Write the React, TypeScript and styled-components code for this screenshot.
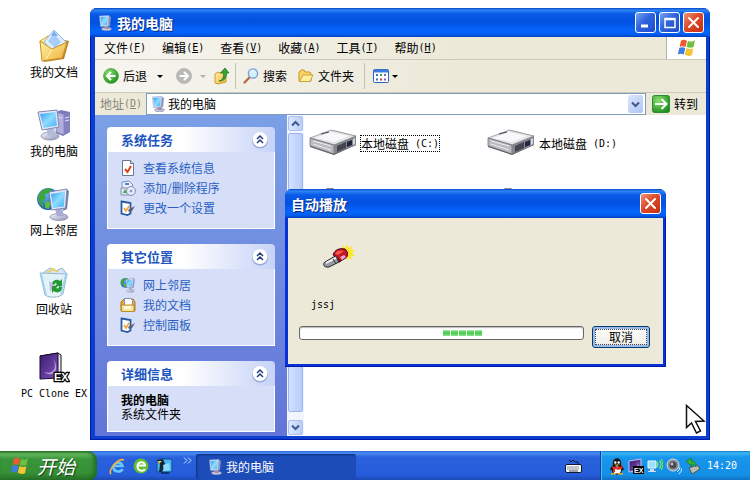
import React from 'react';
import styled, { createGlobalStyle } from 'styled-components';

const cjk = `"Noto Sans CJK SC", sans-serif`;
const mono = `"DejaVu Sans Mono", "Noto Sans CJK SC", monospace`;

const GlobalStyle = createGlobalStyle`
  * { box-sizing: border-box; }
  body { margin: 0; background: #fff; font: 12px/16px ${cjk}; color: #000; }
  button, input { font: inherit; color: inherit; padding: 0; margin: 0; border: 0; background: none; }
  svg { display: block; flex: none; }
  h1, h2, p, ul { margin: 0; padding: 0; font: inherit; }
  ul { list-style: none; }
`;

/* ---------- layout ---------- */

const Page = styled.div`
  min-height: 100vh;
  display: flex;
  flex-direction: column;
`;

const Workspace = styled.main`
  flex: 1;
  display: grid;
  grid-template-columns: 90px minmax(0, 1fr);
`;

const Shortcuts = styled.nav`
  display: flex;
  flex-direction: column;
  gap: 27px;
  padding: 28px 0 0 18px;
`;

const Shortcut = styled.button<{ $spaced?: boolean }>`
  display: flex;
  flex-direction: column;
  align-items: center;
  white-space: nowrap;
  margin-top: ${p => (p.$spaced ? '6px' : '0')};
`;

const Latin = styled.span`
  font: 10px/16px ${mono};
`;

const AccessKey = styled(Latin)`
  u { text-underline-offset: 1px; }
`;

const Window = styled.section`
  position: relative;
  display: flex;
  flex-direction: column;
  margin: 8px 40px 11px 0;
  border-radius: 7px 7px 0 0;
  background: #0a3fd0;
  box-shadow: inset 1px 0 #0019a8, inset -1px -1px #0019a8;
`;

const TitleBar = styled.header<{ $inset: number }>`
  display: flex;
  align-items: center;
  gap: 4px;
  height: 29px;
  padding: 0 ${p => p.$inset}px 0 ${p => p.$inset + 1}px;
  border-radius: 7px 7px 0 0;
  background: linear-gradient(#0a43c4 0, #2d86f5 2px, #0a5ae6 6px, #0250e0 14px, #0464fb 22px, #0360f5 26px, #0240c0 29px);
`;

const Title = styled.h1`
  flex: 1;
  font-size: 14px;
  line-height: 20px;
  font-weight: 700;
  color: #fff;
  text-shadow: 1px 1px #0a2a80;
`;

const CaptionButtons = styled.div`
  display: flex;
  gap: 3px;
`;

const CaptionButton = styled.button<{ $close?: boolean }>`
  display: grid;
  place-items: center;
  width: 21px;
  height: 21px;
  border: 1px solid #fff;
  border-radius: 3px;
  background: ${p => (p.$close
    ? 'linear-gradient(135deg, #ee9678, #dc4a28 45%, #c33012)'
    : 'linear-gradient(135deg, #7ba2f2, #2f63dc 45%, #1c4cd0)')};
`;

const WindowBody = styled.div`
  flex: 1;
  display: flex;
  flex-direction: column;
  margin: 0 4px 4px 5px;
  background: #ece9d8;
`;

const MenuRow = styled.div`
  display: flex;
  height: 23px;
  border-bottom: 1px solid #cdc9b8;
  background: linear-gradient(90deg, #f6f5f0, #ece9d8 60%);
`;

const Menu = styled.nav`
  flex: 1;
  display: flex;
  align-items: center;
  gap: 16px;
  padding-left: 9px;
`;

const MenuItem = styled.button`
  display: flex;
  white-space: nowrap;
`;

const FlagBox = styled.div`
  display: grid;
  place-items: center;
  width: 40px;
  border-left: 1px solid #b8b4a4;
  background: #fff;
`;

const Toolbar = styled.div`
  display: flex;
  align-items: center;
  height: 33px;
  padding-left: 8px;
  border-bottom: 1px solid #cdc9b8;
  background: linear-gradient(90deg, #f6f5f0, #ece9d8 60%);
`;

const ToolButton = styled.button<{ $after: number }>`
  display: flex;
  align-items: center;
  gap: 4px;
  margin-right: ${p => p.$after}px;
  white-space: nowrap;
`;

const Divider = styled.div<{ $after: number }>`
  width: 1px;
  height: 26px;
  margin-right: ${p => p.$after}px;
  background: #c5c2b2;
`;

const Caret = styled.span<{ $muted?: boolean; $before: number }>`
  margin-left: ${p => p.$before}px;
  border: 3px solid transparent;
  border-bottom: 0;
  border-top-color: ${p => (p.$muted ? '#b5b3aa' : '#000')};
`;

const AddressRow = styled.div`
  display: flex;
  align-items: center;
  height: 22px;
  padding-right: 8px;
`;

const AddressLabel = styled.label`
  display: flex;
  width: 51px;
  padding-left: 5px;
  color: #88867c;
`;

const Combo = styled.div`
  flex: 1;
  display: flex;
  align-items: center;
  gap: 2px;
  height: 22px;
  padding: 0 2px 0 3px;
  border: 1px solid #7f9db9;
  background: #fff;
`;

const ComboInput = styled.input`
  flex: 1;
  min-width: 0;
  outline: 0;
`;

const ComboArrow = styled.button`
  display: grid;
  place-items: center;
  width: 15px;
  height: 18px;
  border-radius: 2px;
  background: linear-gradient(135deg, #dce7fd, #aec5f5);
`;

const GoButton = styled.button`
  display: flex;
  align-items: center;
  gap: 4px;
  margin-left: 6px;
  white-space: nowrap;
`;

const Content = styled.div`
  flex: 1;
  display: grid;
  grid-template-columns: 192px 17px minmax(0, 1fr);
  background: #fff;
`;

const Sidebar = styled.aside`
  display: flex;
  flex-direction: column;
  gap: 15px;
  padding: 12px 12px 4px;
  background: linear-gradient(#7ba0e6, #6375d8);
`;

const PanelBox = styled.section`
  border-radius: 4px 4px 0 0;
  overflow: hidden;
`;

const PanelHead = styled.header`
  display: flex;
  align-items: center;
  justify-content: space-between;
  height: 25px;
  padding: 0 6px 0 14px;
  background: linear-gradient(90deg, #fff 45%, #c6d3f7);
  color: #1c55c0;
`;

const PanelTitle = styled.h2`
  font-size: 13px;
  font-weight: 700;
`;

const PanelBody = styled.div`
  padding: 6px 12px 10px;
  border: 1px solid #fff;
  border-top: 0;
  background: #d6dff7;
`;

const TaskLink = styled.a`
  display: flex;
  align-items: center;
  gap: 7px;
  height: 20px;
  color: #2a5fc4;
  text-decoration: none;
`;

const Details = styled.div`
  padding: 1px 1px 0;
  line-height: 14px;
`;

const Scroll = styled.div`
  display: flex;
  flex-direction: column;
  gap: 2px;
  padding: 1px;
  background: #f3f5fd;
`;

const ScrollButton = styled.button`
  display: grid;
  place-items: center;
  height: 15px;
  border: 1px solid #a9c0f0;
  border-radius: 2px;
  background: linear-gradient(90deg, #dde8ff, #b9cdfa);
`;

const Thumb = styled.div`
  flex: 1;
  margin-bottom: 6px;
  border: 1px solid #9cb4ea;
  border-radius: 2px;
  background: linear-gradient(90deg, #d3e0ff, #b7ccfb);
`;

const Files = styled.div`
  display: grid;
  grid-template-columns: repeat(auto-fill, 178px);
  grid-auto-rows: 28px;
  align-content: start;
  row-gap: 31px;
  padding: 14px 5px;
`;

const FileItem = styled.button`
  display: flex;
  align-items: center;
  gap: 4px;
`;

const FileName = styled.span<{ $focus?: boolean }>`
  display: flex;
  height: 15px;
  line-height: 15px;
  white-space: pre;
  outline: ${p => (p.$focus ? '1px dotted #000' : '0')};
`;

/* ---------- dialog ---------- */

const Dialog = styled.section`
  position: absolute;
  left: 195px;
  right: 44px;
  top: 181px;
  border-radius: 7px 7px 0 0;
  background: #0831d9;
  box-shadow: inset -1px -1px #0019a8;
`;

const DialogBody = styled.div`
  display: flex;
  flex-direction: column;
  margin: 0 3px;
  padding: 26px 13px 16px 11px;
  background: #ece9d8;
`;

const DialogEdge = styled.div`
  height: 3px;
`;

const DialogIcon = styled.div`
  margin-left: 23px;
`;

const DialogText = styled.p`
  margin: 26px 0 13px 12px;
  font: 10px/16px ${mono};
`;

const DialogRow = styled.div`
  display: flex;
  align-items: flex-start;
  gap: 8px;
`;

const Progress = styled.div`
  flex: 1;
  display: flex;
  gap: 1px;
  height: 14px;
  padding: 3px 2px;
  border: 1px solid #686868;
  border-radius: 3px;
  background: #fff;
  box-shadow: inset 0 1px 1px #bbb;
`;

const ProgressLead = styled.span`
  width: 50%;
`;

const Chunk = styled.span`
  width: 7px;
  background: linear-gradient(#a5e8a5, #3ecb45 50%, #8fe28f);
`;

const CancelButton = styled.button`
  width: 58px;
  height: 22px;
  border: 1px solid #003c74;
  border-radius: 3px;
  background: linear-gradient(#fff, #f1f0ea 80%, #dcd8cb);
  box-shadow: inset 0 0 0 2px #9ab8ea;
  outline: 1px dotted #444;
  outline-offset: -4px;
`;

const Pointer = styled.div`
  position: absolute;
  right: 3px;
  bottom: 6px;
`;

/* ---------- taskbar ---------- */

const Taskbar = styled.footer`
  display: flex;
  align-items: stretch;
  height: 30px;
  color: #fff;
  background: linear-gradient(#2a5fd2 0, #4b8ef2 2px, #2a62dd 6px, #245cda 24px, #1c46ad 30px);
`;

const StartButton = styled.button`
  display: flex;
  align-items: center;
  gap: 7px;
  width: 97px;
  padding-left: 10px;
  border-radius: 0 9px 9px 0;
  background: linear-gradient(#2f7d2f 0, #68b862 3px, #3a963a 8px, #368f36 22px, #256d25 30px);
  box-shadow: inset -3px 0 4px #1f6a22;
  font-size: 19px;
  line-height: 24px;
  font-style: italic;
  text-shadow: 1px 1px 1px #143f14;
`;

const QuickLaunch = styled.nav`
  display: flex;
  align-items: center;
  gap: 7px;
  width: 99px;
  padding-left: 12px;
`;

const IconButton = styled.button`
  display: grid;
  place-items: center;
`;

const More = styled(IconButton)`
  align-self: flex-start;
  margin: 6px 0 0 3px;
`;

const TaskButton = styled.button`
  flex: 0 1 160px;
  display: flex;
  align-items: center;
  gap: 3px;
  margin: 3px 0 2px;
  padding-left: 11px;
  border-radius: 3px;
  background: #1c4cb8;
  box-shadow: inset 1px 1px 2px #0d2f80;
`;

const LanguageBar = styled.div`
  flex: 1;
  display: flex;
  align-items: center;
  justify-content: flex-end;
  padding-right: 18px;
`;

const Tray = styled.div`
  display: flex;
  align-items: center;
  gap: 3px;
  padding: 0 13px 0 8px;
  border-left: 1px solid #0c3f9c;
  background: linear-gradient(#1377c8 0, #3cb8f6 2px, #1896ea 6px, #148fe6 24px, #0f6cbc 30px);
  box-shadow: inset 1px 0 #4cc0f8;
`;

const Clock = styled.time`
  margin-left: 4px;
  font: 10px/16px ${mono};
`;

/* ---------- drawings ---------- */

const Gradients = () => (
  <svg width="0" height="0" style={{ position: 'absolute' }} aria-hidden="true">
    <defs>
      <linearGradient id="screen" x1="0" y1="0" x2="1" y2="1">
        <stop offset="0" stopColor="#2f9bef" /><stop offset=".5" stopColor="#8fdcff" /><stop offset="1" stopColor="#45aef5" />
      </linearGradient>
      <linearGradient id="metal" x1="0" y1="0" x2="1" y2="1">
        <stop offset="0" stopColor="#f5f6fc" /><stop offset="1" stopColor="#8d93b8" />
      </linearGradient>
      <linearGradient id="folder" x1="0" y1="0" x2="1" y2="1">
        <stop offset="0" stopColor="#fff3a4" /><stop offset="1" stopColor="#efb13a" />
      </linearGradient>
      <radialGradient id="earth" cx=".35" cy=".3" r=".8">
        <stop offset="0" stopColor="#69b9ff" /><stop offset="1" stopColor="#0c3fa8" />
      </radialGradient>
      <radialGradient id="green" cx=".35" cy=".3" r=".8">
        <stop offset="0" stopColor="#8be06d" /><stop offset="1" stopColor="#188a1b" />
      </radialGradient>
      <linearGradient id="violet" x1="0" y1="0" x2="1" y2="1">
        <stop offset="0" stopColor="#3b1d72" /><stop offset="1" stopColor="#8050b8" />
      </linearGradient>
    </defs>
  </svg>
);

const MonitorIcon = ({ size = 16 }: { size?: number }) => (
  <svg width={size} height={size} viewBox="0 0 16 16">
    <ellipse cx="9.5" cy="14" rx="5" ry="1.8" fill="#c5c8dc" stroke="#777da0" strokeWidth=".5" />
    <path d="M7 11l4-1 1 4H8z" fill="#a78ba8" />
    <path d="M12 1l2 1-1 9-3 1z" fill="#8d93b8" />
    <path d="M2.500 1L12 .5l-1 10.500-7.500.5z" fill="#dfe5f8" stroke="#8aa0cc" strokeWidth=".6" />
    <path d="M3.500 2l7.500-.4-.9 8.400-5.800.4z" fill="url(#screen)" />
  </svg>
);

const DocumentsIcon = () => (
  <svg width="34" height="36" viewBox="0 0 34 36">
    <path d="M4 15l10-6 18 4-5 18-20 3z" fill="#b98428" />
    <path d="M3 13l8-5 5 2 14 4-5 16-19 1z" fill="#ffe68a" stroke="#dca43c" />
    <path d="M7 14L17 2l12 12-11 13z" fill="#dceeff" stroke="#8fb9e8" />
    <path d="M11 13l6-7 7 8-6 6z" fill="#a7cdf8" />
    <path d="M17 3l4 5h-7z" fill="#78aeea" />
    <path d="M3 13l12 8 15-7-5 16-20 3z" fill="url(#folder)" stroke="#c78f2b" />
    <path d="M15 21L9 31" stroke="#fff5bc" />
  </svg>
);

const ComputerIcon = () => (
  <svg width="36" height="36" viewBox="0 0 36 36">
    <path d="M20 5l5-2 9 2v20l-7 4-7-3z" fill="#7d79b8" />
    <path d="M20 5l8 2v21l-8-3z" fill="#b1afe0" stroke="#6d6aa6" strokeWidth=".6" />
    <path d="M28 7l6-2v20l-6 3z" fill="#8580c0" />
    <path d="M29 11l4-1M29 14l4-1M22 10l4 1" stroke="#e2e1ff" />
    <ellipse cx="14" cy="29" rx="9" ry="4" fill="url(#metal)" stroke="#7c80a0" strokeWidth=".7" />
    <path d="M10 21l8-2 1 9-7 1z" fill="#b6bcd8" />
    <path d="M2 5l19-2 2 17-17 3z" fill="#e4e8f8" stroke="#8288ae" />
    <path d="M4 7l15.500-2 1.500 13.500L7.500 21z" fill="url(#screen)" />
  </svg>
);

const NetworkIcon = ({ size = 36 }: { size?: number }) => (
  <svg width={size} height={size} viewBox="0 0 36 36">
    <circle cx="12" cy="13" r="11" fill="url(#earth)" />
    <path d="M3 8c3-5 9-7 13-5l-3 4-4 1 1 4-4 4 2 6c-4-2-7-8-5-14z" fill="#3da637" />
    <path d="M9 15l6 1-2 7-4-1z" fill="#57bd45" />
    <ellipse cx="23" cy="31" rx="9" ry="3.500" fill="url(#metal)" stroke="#7c80a0" strokeWidth=".7" />
    <path d="M19 23l7-1 2 8h-7z" fill="#a9abd0" />
    <path d="M30 3l3 2-2 18-4 2z" fill="#777cac" />
    <path d="M13 6l18-3-1.500 19-14 2z" fill="#e1e6f8" stroke="#7f86b0" />
    <path d="M15 8l14-2.500-1.200 15L17 22z" fill="url(#screen)" />
  </svg>
);

const RecycleIcon = () => (
  <svg width="34" height="36" viewBox="0 0 34 36">
    <path d="M6 8l7-5 6 3 6-3 5 6-2 5-20 1z" fill="#d4e7f8" stroke="#8fb3d2" />
    <path d="M10 8l6-4 5 3" fill="none" stroke="#f2cf59" strokeWidth="2" />
    <path d="M3 8l27 1-4 20c-4 4-14 4-18 1z" fill="#e3f4fa" fillOpacity=".88" stroke="#91b9cf" />
    <path d="M4 9l5 21M29 10l-5 19" stroke="#a4d4ef" strokeWidth="2" />
    <path d="M12 16l6 4-5 7z" fill="#b9bce0" />
    <path d="M15 18c2-4 6-4 8-2l2-2v7h-7l2-2c-1-1-2-1-3 1zM25 22c0 5-5 7-8 4l-2 2v-7h6l-2 2c2 1 3 0 3-2z" fill="#269830" />
  </svg>
);

const CloneIcon = () => (
  <svg width="32" height="36" viewBox="0 0 32 36">
    <path d="M2 6l18-3 3 2v24l-3 1z" fill="#eee" stroke="#111" />
    <path d="M2 6l18-3v25L2 29z" fill="url(#violet)" stroke="#160a30" />
    <path d="M6 22c9 3 14-4 9-13 8 10 0 20-9 13z" fill="#b79bdf" />
    <text x="16" y="31" fontFamily="Liberation Sans" fontSize="11" fontWeight="700" fill="#fff" stroke="#000" strokeWidth="2.500" paintOrder="stroke">EX</text>
  </svg>
);

const Minimize = () => <svg width="15" height="15"><path d="M3 11h7" stroke="#fff" strokeWidth="3" /></svg>;
const Maximize = () => <svg width="15" height="15"><path d="M3 3.500h10v9H3zM3 4.500h10" stroke="#fff" strokeWidth="1.500" fill="none" /></svg>;
const Close = () => <svg width="15" height="15"><path d="M3 3l9 9M12 3l-9 9" stroke="#fff" strokeWidth="2" strokeLinecap="round" /></svg>;

const FlagIcon = ({ size = 20 }: { size?: number }) => (
  <svg width={size} height={size} viewBox="0 0 20 20">
    <path d="M4 3c2-2 4-1 6 0L8.500 9c-2-1-4-1-6 0z" fill="#ec5a2d" />
    <path d="M11 3c3 1 5 1 7-1l-1.500 7c-2 1-4 1-7 0z" fill="#6fbf3f" />
    <path d="M2.300 10c2-1 4-1 6 0l-1.500 6.500c-2-1-4-1-6 0z" fill="#3c7de4" />
    <path d="M9.300 10.300c3 1 5 1 7 0L15 17c-2 1.500-5 1-7.200-.2z" fill="#f6c531" />
  </svg>
);

const ArrowCircle = ({ back }: { back?: boolean }) => (
  <svg width="16" height="16" viewBox="0 0 16 16">
    <circle cx="8" cy="8" r="7.500" fill={back ? 'url(#green)' : '#b9b9b6'} stroke={back ? '#3b9b35' : '#a3a3a0'} strokeWidth=".6" />
    <path d={back ? 'M12.500 8H4M8 4L4 8l4 4' : 'M3.500 8H12M8 4l4 4-4 4'} fill="none" stroke="#fff" strokeWidth="2" />
  </svg>
);

const UpFolderIcon = () => (
  <svg width="16" height="18" viewBox="0 0 16 18">
    <path d="M1 7l3-2 2 1 6-1v10l-8 2-3-1z" fill="url(#folder)" stroke="#cf9c32" />
    <path d="M5 14c4-1 5-4 4.500-8H6.500L11 1l4 5h-2.500c0 5-2 8-7.500 8z" fill="#35a434" stroke="#17701c" strokeWidth=".7" />
  </svg>
);

const SearchIcon = () => (
  <svg width="16" height="16" viewBox="0 0 16 16">
    <path d="M1.500 14.500L7 9" stroke="#b86c4a" strokeWidth="2.400" strokeLinecap="round" />
    <circle cx="10" cy="5.500" r="4.600" fill="#d5efff" stroke="#7d9fd0" strokeWidth="1.400" />
    <path d="M7.500 5c.4-1.400 1.500-2 3-2" stroke="#fff" fill="none" />
  </svg>
);

const FolderIcon = () => (
  <svg width="16" height="14" viewBox="0 0 16 14">
    <path d="M1 12V3l2-2h3l1 2h5l1 2v7z" fill="#f8d568" stroke="#c9952c" />
    <path d="M1.500 12.500L5 6h10l-3 6.500z" fill="#fff0a0" stroke="#d0a038" />
  </svg>
);

const ViewsIcon = () => (
  <svg width="16" height="14" viewBox="0 0 16 14">
    <rect x=".5" y=".5" width="15" height="13" rx="1" fill="#fff" stroke="#2a62bc" />
    <path d="M1 2h14" stroke="#3c7ce0" strokeWidth="3" />
    <path d="M3 6h2M3 10.500h2" stroke="#3b6dc7" strokeWidth="2" />
    <path d="M7 6h2" stroke="#41a050" strokeWidth="2" /><path d="M7 10.500h2" stroke="#d23d32" strokeWidth="2" />
    <path d="M11 6h2M11 10.500h2" stroke="#7a5bc0" strokeWidth="2" />
  </svg>
);

const GoIcon = () => (
  <svg width="18" height="18" viewBox="0 0 18 18">
    <rect x=".5" y=".5" width="17" height="17" rx="2" fill="url(#green)" stroke="#2d8c36" />
    <path d="M3 9h11M9.500 4l5 5-5 5" fill="none" stroke="#fff" strokeWidth="2" />
  </svg>
);

const Chevron = ({ up }: { up?: boolean }) => (
  <svg width="9" height="7"><path d={up ? 'M1 5.500l3.500-3.500L8 5.500' : 'M1 1.500L4.500 5 8 1.500'} fill="none" stroke="#42588f" strokeWidth="2" /></svg>
);

const CollapseIcon = () => (
  <svg width="18" height="18" viewBox="0 0 18 18">
    <circle cx="9" cy="9.500" r="8" fill="#9aabd8" />
    <circle cx="9" cy="8.500" r="7.500" fill="#fff" />
    <path d="M6 8l3-3 3 3M6 12l3-3 3 3" fill="none" stroke="#203c80" strokeWidth="1.500" />
  </svg>
);

const CheckPageIcon = () => (
  <svg width="16" height="16" viewBox="0 0 16 16">
    <path d="M2.500.5h8l3 3v12h-11z" fill="#fff" stroke="#6a7693" />
    <path d="M10.500.5v3h3" fill="#cdd5e8" stroke="#6a7693" />
    <path d="M5 9l2.500 3L11 6" fill="none" stroke="#e2431c" strokeWidth="2" />
  </svg>
);

const ProgramsIcon = () => (
  <svg width="16" height="16" viewBox="0 0 16 16">
    <path d="M2 2l7-1 4 4-3 4-8-1z" fill="#e9eefa" stroke="#8090b4" />
    <path d="M1 8h8v7H1z" fill="#dde4ef" stroke="#8893ac" />
    <circle cx="11" cy="11" r="4.500" fill="#e3e9f6" stroke="#8790b4" />
    <circle cx="11" cy="11" r="1.300" fill="#8f98c4" />
    <path d="M3 13l2-4 2 4z" fill="#42a846" /><path d="M5 4h4" stroke="#4d83dc" strokeWidth="2" />
  </svg>
);

const SettingsIcon = () => (
  <svg width="16" height="16" viewBox="0 0 16 16">
    <path d="M1.500 1.500l9 1.500v10.500l-3 1.500-6-1.500z" fill="#fff" stroke="#275aa4" strokeWidth="1.800" />
    <path d="M4 8l2 3 3-5" stroke="#f0a030" strokeWidth="1.500" fill="none" />
    <path d="M8 10l7-4-3 5-3 1z" fill="#55627e" />
  </svg>
);

const FolderDocIcon = () => (
  <svg width="16" height="16" viewBox="0 0 16 16">
    <path d="M1 5l3-3h9l2 3v9H1z" fill="#e8ae3b" stroke="#a97a27" />
    <path d="M4.500 1.500h6l2 2V10h-8z" fill="#fff" stroke="#7992bd" />
    <path d="M1 8h13v6.500H2z" fill="#fbe793" stroke="#b98a2f" />
    <path d="M4 10.500h7" stroke="#fff" strokeWidth="2" />
  </svg>
);

const DriveIcon = () => (
  <svg width="48" height="28" viewBox="0 0 48 28">
    <path d="M1 11L23 1l24 6v9L25 26 1 18z" fill="#55565e" />
    <path d="M1 9L22 1l25 6-22 9z" fill="#e4e4e7" stroke="#8c8c92" strokeWidth=".7" />
    <path d="M6 9l16-6 18 4-15 6z" fill="#f8f8fa" />
    <path d="M1 9l24 7v9L1 17z" fill="#b9b9bf" stroke="#66666d" strokeWidth=".7" />
    <path d="M25 16l22-9v9l-22 9z" fill="#85858d" />
    <path d="M28 17l9-4v6l-9 4z" fill="#44454d" /><path d="M38 13l5-2v5l-5 2z" fill="#20263f" />
    <path d="M4 12l18 5M4 15l18 6" stroke="#ededf0" /><path d="M12 5l8-2" stroke="#44454b" />
    <path d="M44 10l2-1v6l-2 1z" fill="#d7d8df" />
  </svg>
);

const DiscIcon = () => (
  <svg width="48" height="28" viewBox="0 0 48 28">
    <ellipse cx="21" cy="7" rx="7" ry="7" fill="#cfd3e6" stroke="#5d6484" />
    <path d="M1 14L23 6l24 7v6L25 27 1 20z" fill="#b9b9bf" stroke="#66666d" />
  </svg>
);

const TorchIcon = () => (
  <svg width="34" height="27" viewBox="0 0 34 27">
    <path d="M18 4l2 1 1-4 2 3 3-4v4l4-2-1 4 4 0-3 3 3 3-4 0 1 4-4-2-2 2-2-4z" fill="#ffe62e" />
    <path d="M3 18L15 11l4 6-12 6c-5 1-7-3-4-5z" fill="#9a9aa2" stroke="#25252a" />
    <path d="M4 18l11-6 1 2-12 6z" fill="#f4f4f6" />
    <path d="M11 15l3 5M14 13l3 5" stroke="#333" />
    <path d="M11 11c2-6 7-7 12-6 4 3 3 9-1 10l-5 3c0-3-2-6-6-7z" fill="#c51625" stroke="#450611" />
    <path d="M13 10c2-4 5-4 9-3l-6 4z" fill="#f45b4a" />
    <path d="M18 13l4-2 2 2-4 3z" fill="#e6a0d7" />
  </svg>
);

const PointerIcon = () => (
  <svg width="22" height="30" viewBox="0 0 22 30">
    <path d="M1.500 1.500v22l5-4.500 5 10 4-2-5-9.500 8.500-.5z" fill="#fff" stroke="#111" strokeWidth="1.500" />
  </svg>
);

const ExplorerIcon = () => (
  <svg width="17" height="17" viewBox="0 0 17 17">
    <path d="M13.500 11c-1 3-8 4-9-1-.5-5 7-8 9-2H5" fill="none" stroke="#66c7ff" strokeWidth="2.600" />
    <path d="M2 16C-1 12 9 0 15 2" fill="none" stroke="#f5ad3d" strokeWidth="1.700" />
  </svg>
);

const BrowserIcon = () => (
  <svg width="16" height="16" viewBox="0 0 16 16">
    <circle cx="8" cy="8" r="7.500" fill="#62bd30" />
    <path d="M12 11c-2 3-7 2-7.500-2C4 4 11 2 12 7.500H5" fill="none" stroke="#fff" strokeWidth="2" />
  </svg>
);

const DesktopIcon = () => (
  <svg width="17" height="16" viewBox="0 0 17 16">
    <rect x="1" y="1" width="15" height="13" rx="2" fill="#49b8f2" stroke="#0d4a91" />
    <path d="M1 2l6-1 2 5-3 8H3l1-7z" fill="#14253e" />
    <path d="M2 3h4l-3 3z" fill="#f5c64f" /><path d="M7 7l6-2 1 7-6 1z" fill="#8fdcfa" />
    <path d="M5 15h8" stroke="#0c3572" strokeWidth="2" />
  </svg>
);

const KeyboardIcon = () => (
  <svg width="17" height="14" viewBox="0 0 17 14">
    <path d="M4 1l2 2 2-2 2 2 3 0v2" fill="none" stroke="#101830" />
    <rect x=".5" y="5.500" width="16" height="8" rx="1.500" fill="#fff" stroke="#101830" />
    <path d="M2.500 8h12M2.500 10h12" stroke="#101830" strokeDasharray="1 1" /><path d="M4 12h9" stroke="#101830" strokeWidth=".8" />
  </svg>
);

const PenguinIcon = () => (
  <svg width="16" height="17" viewBox="0 0 16 17">
    <path d="M4 7c-2-9 10-9 8 0 4 4 3 6 1 5 0 6-10 6-10 0-3 1-2-2 1-5z" fill="#17151a" />
    <ellipse cx="8" cy="12" rx="4" ry="3.500" fill="#fff" />
    <circle cx="6.300" cy="4.500" r="1.200" fill="#fff" /><circle cx="9.700" cy="4.500" r="1.200" fill="#fff" />
    <path d="M2 7c3 3 9 3 12 0l-1 4c-3 1-5 1-7 0v3H4v-3z" fill="#e52a1c" />
    <path d="M5 6.500h6L8 8zM2 15h5v1.500H2zM9 15h5v1.500H9z" fill="#f7a820" />
  </svg>
);

const SmallCloneIcon = () => (
  <svg width="16" height="16" viewBox="0 0 16 16">
    <path d="M1 3l12-2v11L1 14z" fill="url(#violet)" stroke="#e9ddff" strokeWidth=".8" />
    <path d="M4 10c5 1 7-3 5-6 4 4 0 10-5 6z" fill="#c3a9e7" />
    <rect x="5" y="8" width="11" height="8" fill="#000" />
    <text x="6" y="15" fontFamily="Liberation Sans" fontSize="7" fontWeight="700" fill="#fff">EX</text>
  </svg>
);

const SignalIcon = () => (
  <svg width="16" height="16" viewBox="0 0 16 16">
    <path d="M1 3h8v7H1z" fill="#9ae0ff" stroke="#e9f7ff" /><path d="M3 11h4v2h2v1H1v-1h2z" fill="#d6dcf0" />
    <path d="M10 4q2 2.500 0 5M12.500 2.500q3 4 0 8" fill="none" stroke="#7bea52" strokeWidth="1.300" />
    <path d="M14.500 1q3 5.500 0 11" fill="none" stroke="#7bea52" />
  </svg>
);

const SpeakerIcon = () => (
  <svg width="16" height="16" viewBox="0 0 16 16">
    <circle cx="7" cy="7" r="6" fill="#8c8f98" stroke="#dce0e8" /><circle cx="7" cy="7" r="3.500" fill="#454850" />
    <circle cx="6" cy="6" r="1.500" fill="#b9bdc5" />
    <path d="M11 14q3-2 3-5M13 16q3-3 3-6" fill="none" stroke="#d0ecff" />
  </svg>
);

const EjectIcon = () => (
  <svg width="15" height="16" viewBox="0 0 15 16">
    <path d="M4 10l8-3 3 4-8 5z" fill="#b9bdb9" stroke="#4c564d" />
    <path d="M1 3l6-3-1 3c4 0 5 2 5 6-2-3-4-3-5-3l1 3z" fill="#34b336" stroke="#167420" strokeWidth=".7" />
  </svg>
);

const MoreIcon = () => <svg width="9" height="7"><path d="M1 .5l3 3-3 3M5 .5l3 3-3 3" fill="none" stroke="#cfe2ff" /></svg>;

/* ---------- parts ---------- */

const shortcuts = [
  { name: '我的文档', icon: <DocumentsIcon /> },
  { name: '我的电脑', icon: <ComputerIcon /> },
  { name: '网上邻居', icon: <NetworkIcon /> },
  { name: '回收站', icon: <RecycleIcon /> },
];

const menus = [['文件', 'F'], ['编辑', 'E'], ['查看', 'V'], ['收藏', 'A'], ['工具', 'T'], ['帮助', 'H']];

const Key = ({ letter }: { letter: string }) => <AccessKey>(<u>{letter}</u>)</AccessKey>;

const Panel = ({ title, children }: { title: string; children: React.ReactNode }) => (
  <PanelBox>
    <PanelHead>
      <PanelTitle>{title}</PanelTitle>
      <IconButton aria-label={title}><CollapseIcon /></IconButton>
    </PanelHead>
    <PanelBody>{children}</PanelBody>
  </PanelBox>
);

const Links = ({ items }: { items: [string, React.ReactNode][] }) => (
  <ul>
    {items.map(([name, icon]) => (
      <li key={name}><TaskLink href="#">{icon}<span>{name}</span></TaskLink></li>
    ))}
  </ul>
);

const AutoPlay = () => (
  <Dialog role="dialog" aria-label="自动播放">
    <TitleBar $inset={5}>
      <Title>自动播放</Title>
      <CaptionButton $close aria-label="关闭"><Close /></CaptionButton>
    </TitleBar>
    <DialogBody>
      <DialogIcon><TorchIcon /></DialogIcon>
      <DialogText>jssj</DialogText>
      <DialogRow>
        <Progress role="progressbar" aria-label="jssj">
          <ProgressLead />
          {[0, 1, 2, 3, 4].map(n => <Chunk key={n} />)}
        </Progress>
        <CancelButton>取消</CancelButton>
      </DialogRow>
    </DialogBody>
    <DialogEdge />
  </Dialog>
);

export default function App() {
  return (
    <Page>
      <GlobalStyle />
      <Gradients />
      <Workspace>
        <Shortcuts>
          {shortcuts.map(s => <Shortcut key={s.name}>{s.icon}<span>{s.name}</span></Shortcut>)}
          <Shortcut $spaced><CloneIcon /><Latin>PC Clone EX</Latin></Shortcut>
        </Shortcuts>
        <Window>
          <TitleBar $inset={6}>
            <MonitorIcon />
            <Title>我的电脑</Title>
            <CaptionButtons>
              <CaptionButton aria-label="最小化"><Minimize /></CaptionButton>
              <CaptionButton aria-label="最大化"><Maximize /></CaptionButton>
              <CaptionButton $close aria-label="关闭"><Close /></CaptionButton>
            </CaptionButtons>
          </TitleBar>
          <WindowBody>
            <MenuRow>
              <Menu>
                {menus.map(([name, letter]) => <MenuItem key={letter}>{name}<Key letter={letter} /></MenuItem>)}
              </Menu>
              <FlagBox><FlagIcon /></FlagBox>
            </MenuRow>
            <Toolbar>
              <ToolButton $after={13}><ArrowCircle back />后退<Caret $before={6} /></ToolButton>
              <ToolButton $after={8} aria-label="前进"><ArrowCircle /><Caret $before={4} $muted /></ToolButton>
              <ToolButton $after={5} aria-label="向上"><UpFolderIcon /></ToolButton>
              <Divider $after={7} />
              <ToolButton $after={11}><SearchIcon />搜索</ToolButton>
              <ToolButton $after={10}><FolderIcon />文件夹</ToolButton>
              <Divider $after={8} />
              <ToolButton $after={0} aria-label="查看"><ViewsIcon /><Caret $before={-1} /></ToolButton>
            </Toolbar>
            <AddressRow>
              <AddressLabel htmlFor="address">地址<Key letter="D" /></AddressLabel>
              <Combo>
                <MonitorIcon />
                <ComboInput id="address" defaultValue="我的电脑" />
                <ComboArrow aria-label="展开"><Chevron /></ComboArrow>
              </Combo>
              <GoButton><GoIcon />转到</GoButton>
            </AddressRow>
            <Content>
              <Sidebar>
                <Panel title="系统任务">
                  <Links items={[['查看系统信息', <CheckPageIcon />], ['添加/删除程序', <ProgramsIcon />], ['更改一个设置', <SettingsIcon />]]} />
                </Panel>
                <Panel title="其它位置">
                  <Links items={[['网上邻居', <NetworkIcon size={16} />], ['我的文档', <FolderDocIcon />], ['控制面板', <SettingsIcon />]]} />
                </Panel>
                <Panel title="详细信息">
                  <Details><p><b>我的电脑</b></p><p>系统文件夹</p></Details>
                </Panel>
              </Sidebar>
              <Scroll>
                <ScrollButton aria-label="向上滚动"><Chevron up /></ScrollButton>
                <Thumb />
                <ScrollButton aria-label="向下滚动"><Chevron /></ScrollButton>
              </Scroll>
              <Files>
                <FileItem><DriveIcon /><FileName $focus>本地磁盘<Latin> (C:)</Latin></FileName></FileItem>
                <FileItem><DriveIcon /><FileName>本地磁盘<Latin> (D:)</Latin></FileName></FileItem>
                <DiscIcon />
                <DiscIcon />
              </Files>
            </Content>
          </WindowBody>
          <AutoPlay />
          <Pointer><PointerIcon /></Pointer>
        </Window>
      </Workspace>
      <Taskbar>
        <StartButton><FlagIcon />开始</StartButton>
        <QuickLaunch>
          <IconButton aria-label="Internet Explorer"><ExplorerIcon /></IconButton>
          <IconButton aria-label="浏览器"><BrowserIcon /></IconButton>
          <IconButton aria-label="显示桌面"><DesktopIcon /></IconButton>
          <More aria-label="更多"><MoreIcon /></More>
        </QuickLaunch>
        <TaskButton><MonitorIcon />我的电脑</TaskButton>
        <LanguageBar><KeyboardIcon /></LanguageBar>
        <Tray>
          <PenguinIcon /><SmallCloneIcon /><SignalIcon /><SpeakerIcon /><EjectIcon />
          <Clock>14:20</Clock>
        </Tray>
      </Taskbar>
    </Page>
  );
}
